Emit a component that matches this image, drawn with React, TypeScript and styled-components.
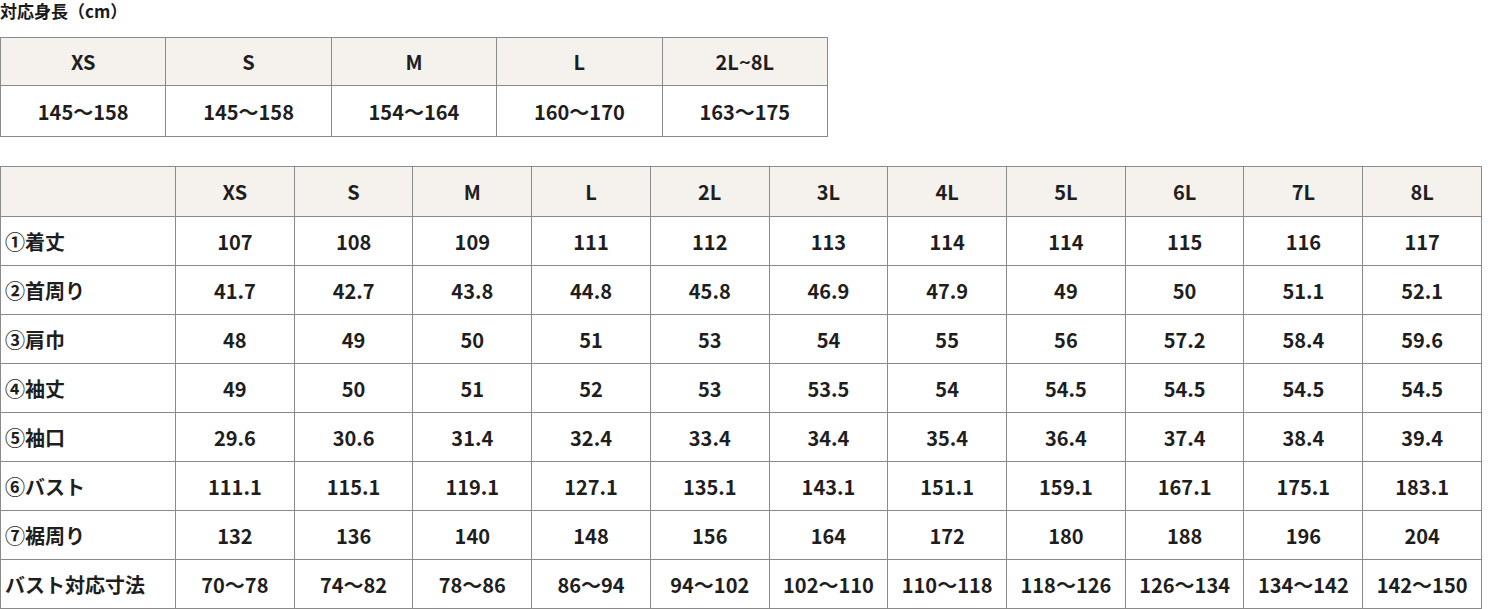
import * as React from 'react'
import styled, { createGlobalStyle } from 'styled-components'

const GlobalStyle = createGlobalStyle`
  html, body {
    margin: 0;
    padding: 0;
    background: #fff;
  }
  body {
    font-family: 'Noto Sans CJK JP', 'Noto Sans', sans-serif;
    color: #1a1a1a;
  }
`

const heightSizes = ['XS', 'S', 'M', 'L', '2L~8L']
const heightRanges = ['145〜158', '145〜158', '154〜164', '160〜170', '163〜175']

const sizes = ['XS', 'S', 'M', 'L', '2L', '3L', '4L', '5L', '6L', '7L', '8L']

interface MeasureRow {
  label: string
  values: string[]
}

const measureRows: MeasureRow[] = [
  { label: '①着丈', values: ['107', '108', '109', '111', '112', '113', '114', '114', '115', '116', '117'] },
  { label: '②首周り', values: ['41.7', '42.7', '43.8', '44.8', '45.8', '46.9', '47.9', '49', '50', '51.1', '52.1'] },
  { label: '③肩巾', values: ['48', '49', '50', '51', '53', '54', '55', '56', '57.2', '58.4', '59.6'] },
  { label: '④袖丈', values: ['49', '50', '51', '52', '53', '53.5', '54', '54.5', '54.5', '54.5', '54.5'] },
  { label: '⑤袖口', values: ['29.6', '30.6', '31.4', '32.4', '33.4', '34.4', '35.4', '36.4', '37.4', '38.4', '39.4'] },
  { label: '⑥バスト', values: ['111.1', '115.1', '119.1', '127.1', '135.1', '143.1', '151.1', '159.1', '167.1', '175.1', '183.1'] },
  { label: '⑦裾周り', values: ['132', '136', '140', '148', '156', '164', '172', '180', '188', '196', '204'] },
  {
    label: 'バスト対応寸法',
    values: ['70〜78', '74〜82', '78〜86', '86〜94', '94〜102', '102〜110', '110〜118', '118〜126', '126〜134', '134〜142', '142〜150'],
  },
]

export default function App() {
  return (
    <Page>
      <GlobalStyle />
      <Title>対応身長（cm）</Title>
      <HeightTable>
        <colgroup>
          {heightSizes.map((s) => (
            <col key={s} />
          ))}
        </colgroup>
        <thead>
          <tr>
            {heightSizes.map((s) => (
              <HeadCell key={s}>{s}</HeadCell>
            ))}
          </tr>
        </thead>
        <tbody>
          <tr>
            {heightRanges.map((r, i) => (
              <BodyCell key={i}>{r}</BodyCell>
            ))}
          </tr>
        </tbody>
      </HeightTable>

      <SizeTable>
        <colgroup>
          <col style={{ width: '175px' }} />
          {sizes.map((s) => (
            <col key={s} />
          ))}
        </colgroup>
        <thead>
          <tr>
            <HeadCell />
            {sizes.map((s) => (
              <HeadCell key={s}>{s}</HeadCell>
            ))}
          </tr>
        </thead>
        <tbody>
          {measureRows.map((row) => (
            <tr key={row.label}>
              <LabelCell>{row.label}</LabelCell>
              {row.values.map((v, i) => (
                <BodyCell key={i}>{v}</BodyCell>
              ))}
            </tr>
          ))}
        </tbody>
      </SizeTable>
    </Page>
  )
}

const Page = styled.div`
  width: 1488px;
  height: 609px;
  overflow: hidden;
`

const Title = styled.div`
  font-size: 17px;
  font-weight: 700;
  line-height: 22px;
  height: 37px;
  box-sizing: border-box;
`

const BaseTable = styled.table`
  border-collapse: collapse;
  table-layout: fixed;
  font-size: 20px;
  font-weight: 700;
  color: #1e1e1e;

  th,
  td {
    border: 1px solid #8a8a8a;
    padding: 0;
    text-align: center;
    vertical-align: middle;
  }
`

const HeightTable = styled(BaseTable)`
  width: 828px;
  margin-bottom: 29px;

  thead tr {
    height: 48px;
  }
  tbody tr {
    height: 51px;
  }
`

const SizeTable = styled(BaseTable)`
  width: 1482px;

  thead tr {
    height: 50px;
  }
  tbody tr {
    height: 49px;
  }
`

const HeadCell = styled.th`
  background: #f5f2ee;
  font-weight: 700;
`

const BodyCell = styled.td`
  background: #fff;
`

const LabelCell = styled.td`
  text-align: left !important;
  padding-left: 4px !important;
`
